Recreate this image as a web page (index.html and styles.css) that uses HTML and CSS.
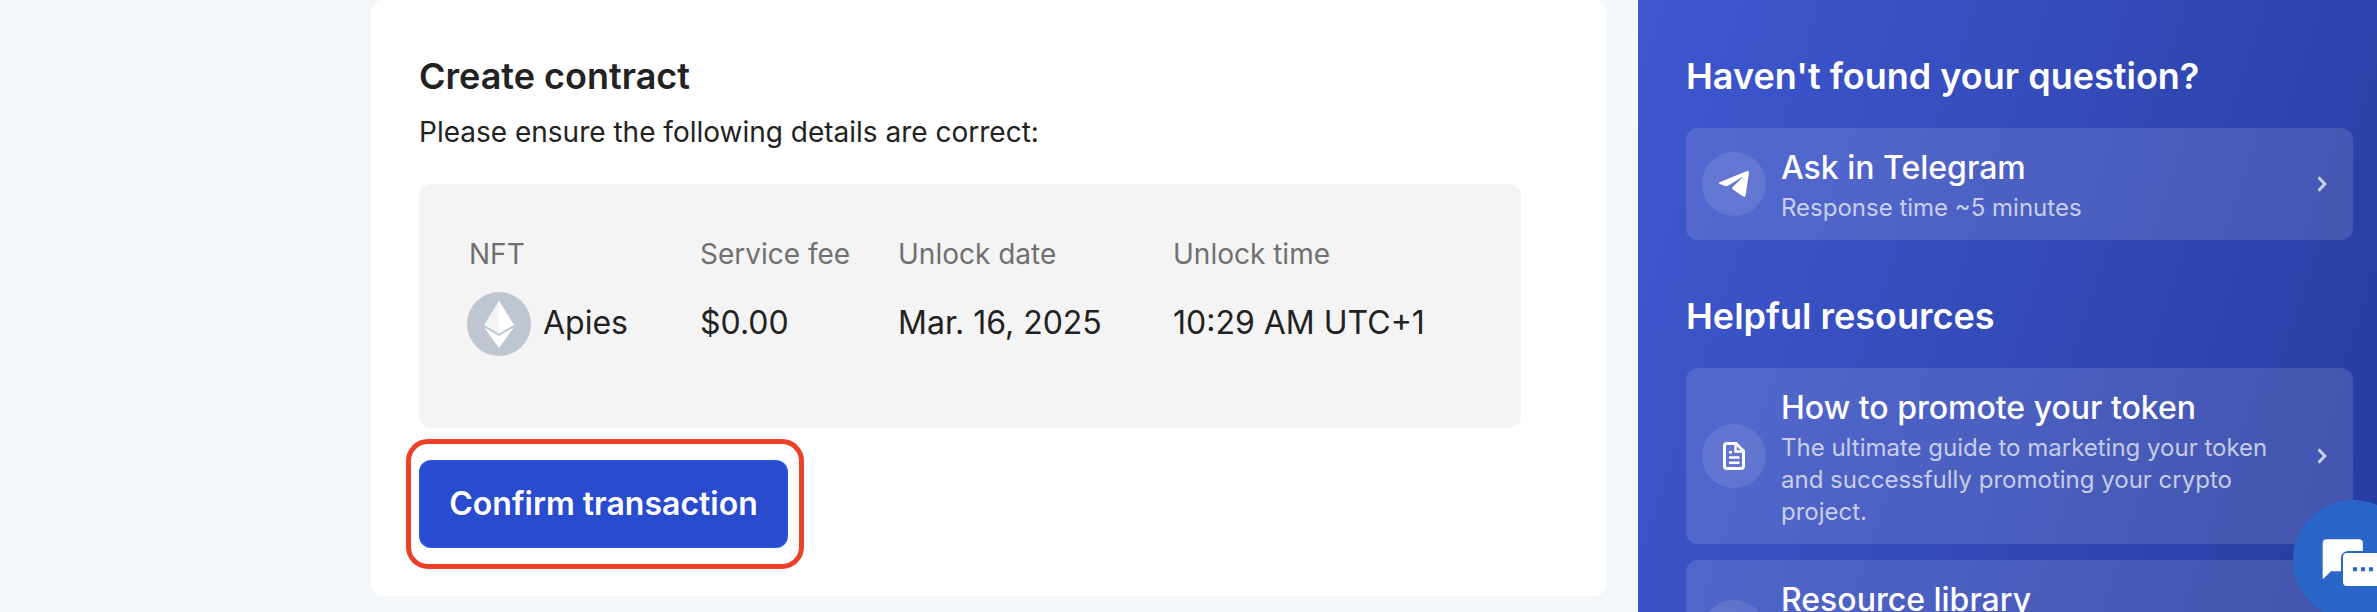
FILE: index.html
```html
<!DOCTYPE html>
<html lang="en">
<head>
<meta charset="utf-8">
<title>Create contract</title>
<link rel="stylesheet" href="styles.css">
</head>
<body>
<div class="page">
  <main class="main">
    <section class="card">
      <h1 class="card-title">Create contract</h1>
      <p class="card-lead">Please ensure the following details are correct:</p>
      <div class="details">
        <div class="detail">
          <span class="label">NFT</span>
          <span class="value token">
            <svg class="token-icon" viewBox="0 0 64 64">
              <circle cx="32" cy="32" r="32" fill="#bfc5d1"/>
              <path d="M32 8.5 17 33 32 41.8z" fill="#f4f4f4"/>
              <path d="M32 8.5 47 33 32 41.8z" fill="#fff"/>
              <path d="M17 35.3 32 44 47 35.3 32 56z" fill="#fff"/>
            </svg>
            <span>Apies</span>
          </span>
        </div>
        <div class="detail"><span class="label">Service fee</span><span class="value">$0.00</span></div>
        <div class="detail"><span class="label">Unlock date</span><span class="value">Mar. 16, 2025</span></div>
        <div class="detail"><span class="label">Unlock time</span><span class="value">10:29 AM UTC+1</span></div>
      </div>
      <div class="highlight"><button class="confirm" type="button">Confirm transaction</button></div>
    </section>
  </main>
  <aside class="sidebar">
    <h2 class="side-title">Haven't found your question?</h2>
    <a class="link">
      <span class="link-icon">
        <svg width="32" height="28" viewBox="0 0 32 28"><path d="M1.6 12.2 29 1.1Q31.2.3 31 2.7L27.6 25.2Q27 27.6 24.8 26.3L14.6 19.2Q13.5 18.2 14.6 17L24.2 7.8Q24.6 6.9 23.4 7.5L10 15.7Q8.900 16.200 7.600 15.900L1.700 14.100Q0 13.200 1.600 12.200z" fill="#fff"/></svg>
      </span>
      <span class="link-body"><span class="link-title">Ask in Telegram</span><span class="link-sub">Response time ~5 minutes</span></span>
      <svg class="chevron" viewBox="0 0 10 16"><path d="M1.500 1.300 7.800 8 1.500 14.700" fill="none" stroke="currentColor" stroke-width="3"/></svg>
    </a>
    <h2 class="side-title">Helpful resources</h2>
    <a class="link">
      <span class="link-icon">
        <svg width="22" height="28" viewBox="0 0 22 28" fill="none" stroke="#fff"><path d="M4 1.500H13L20.500 9V24Q20.500 26.500 18 26.500H4Q1.500 26.500 1.500 24V4Q1.500 1.500 4 1.500z" stroke-width="3"/><path d="M12.500 2V9.500H20" stroke-width="2.500"/><path d="M6 10.300H9M6 15.500H16.500M6 20.800H16.500" stroke-width="2.500"/></svg>
      </span>
      <span class="link-body"><span class="link-title">How to promote your token</span><span class="link-sub">The ultimate guide to marketing your token and successfully promoting your crypto project.</span></span>
      <svg class="chevron" viewBox="0 0 10 16"><path d="M1.500 1.300 7.800 8 1.500 14.700" fill="none" stroke="currentColor" stroke-width="3"/></svg>
    </a>
    <a class="link link-tall">
      <span class="link-icon"></span>
      <span class="link-body"><span class="link-title">Resource library</span></span>
    </a>
  </aside>
  <div class="chat">
    <svg width="120" height="120" viewBox="0 0 120 120">
      <path d="M33.500 39.300H66Q69.800 39.300 69.800 43V51H56Q48 51 48 59V71.300H38L29.700 79.300V43Q29.700 39.300 33.500 39.300z" fill="#fff"/>
      <path d="M54 53H90Q94 53 94 57V94L85 86H54Q50 86 50 82V57Q50 53 54 53z" fill="#fff"/>
      <path d="M60 67.300h4v4h-4zM68 67.300h4v4h-4zM76 67.300h4v4h-4z" fill="#2966c8"/>
    </svg>
  </div>
</div>
</body>
</html>
```
FILE: styles.css
```css
* { box-sizing: border-box; }
body { margin: 0; font-family: Inter, "Liberation Sans", sans-serif; color: #222; background: #f3f7fa; }
.page { position: relative; display: flex; width: 2377px; height: 612px; overflow: hidden; }
.main { flex: none; width: 1638px; padding-left: 371px; }
.card { width: 1235px; height: 596px; padding: 52px 48px 0; background: #fff; border-radius: 12px; }
.card-title { margin: 0; font-size: 36px; line-height: 48px; font-weight: 600; }
.card-lead { margin: 12px 0 32px; font-size: 28px; line-height: 40px; }
.details { display: grid; grid-template-columns: 233px 198px 275px auto; width: 1102px; height: 244px; padding: 50px 48px 0; background: #f4f4f4; border-radius: 12px; }
.detail { display: flex; flex-direction: column; }
.label { font-size: 28px; line-height: 40px; color: #707070; }
.detail:first-child .label { padding-left: 2px; }
.value { display: flex; align-items: center; height: 64px; margin-top: 18px; font-size: 32px; line-height: 40px; }
.value:not(.token) { padding-bottom: 2px; }
.token { gap: 12px; }
.token span { padding-bottom: 2px; }
.token-icon { width: 64px; height: 64px; }
.highlight { width: 398px; margin: 11px 0 0 -13px; padding: 16px 11px 16px 8px; border: 5px solid #ec4127; border-radius: 22px; }
.confirm { display: block; width: 369px; height: 88px; padding: 0; border: 2px solid #2b54dc; border-radius: 12px; background: #294bcd; color: #fff; font: 600 32px/84px Inter, sans-serif; }
.sidebar { flex: none; width: 739px; height: 612px; padding: 52px 24px 0 48px; color: #fff; background: linear-gradient(108deg, #3f58cf 0%, #344bba 48%, #273c9f 100%); overflow: hidden; }
.side-title { margin: 0 0 28px; font-size: 36px; line-height: 48px; font-weight: 600; }
.link + .side-title { margin-top: 52px; }
.link { display: flex; align-items: center; width: 667px; padding: 16px; border-radius: 12px; background: rgba(255,255,255,.12); }
.link + .link { margin-top: 16px; }
.link-tall { height: 144px; }
.link-tall .link-body { align-self: flex-start; }
.link-icon { flex: none; display: flex; align-items: center; justify-content: center; width: 64px; height: 64px; margin-right: 15px; border-radius: 50%; background: rgba(255,255,255,.1); }
.link-body { flex: none; width: 511px; }
.link-title { display: block; font-size: 32px; line-height: 48px; font-weight: 500; }
.link-sub { display: block; font-size: 24px; line-height: 32px; color: rgba(255,255,255,.7); }
.chevron { width: 10px; height: 16px; margin-left: 25px; color: rgba(255,255,255,.7); }
.chat { position: absolute; left: 2293px; top: 500px; width: 120px; height: 120px; border-radius: 50%; background: #2966c8; }
```
